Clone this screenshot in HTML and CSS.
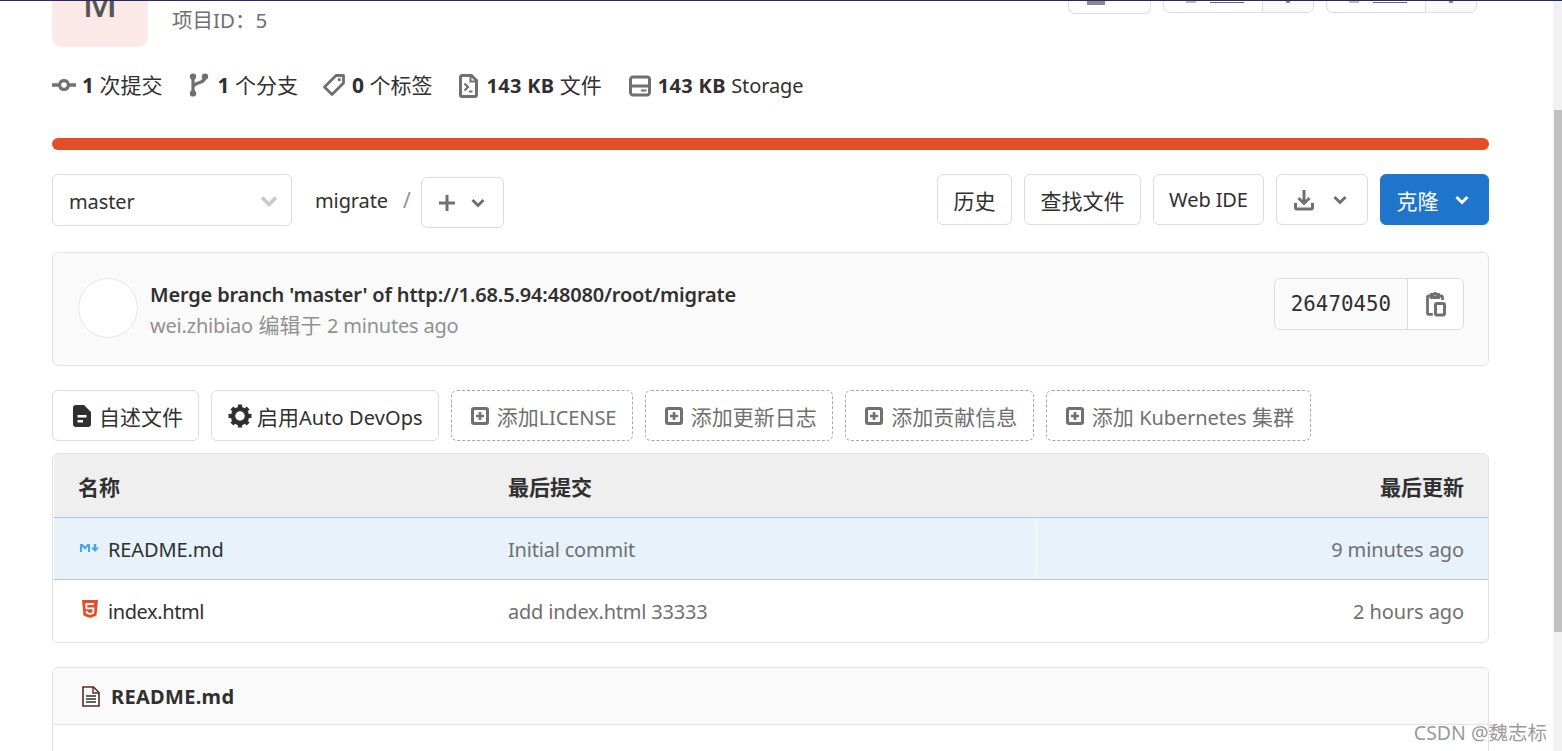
FILE: index.html
```html
<!DOCTYPE html>
<html lang="en">
<head>
    <meta charset="UTF-8">
    <meta name="viewport" content="width=device-width, initial-scale=1.0">
    <title>migrate</title>
    <link rel="stylesheet" href="styles.css">
</head>
<body>
<div class="page">
<main class="content">

    <!-- Project header, scrolled partly out of view -->
    <section class="project-head">
        <div class="project-info">
            <div class="project-avatar"><span>M</span></div>
            <div class="project-id">项目ID：5</div>
        </div>
        <div class="project-buttons">
            <div class="cut-btn cut-notify"><i class="cut-mark"></i></div>
            <div class="cut-btn cut-star"><span class="cut-label"><i class="cut-tick"></i><i class="cut-line"></i></span><span class="cut-count"><i class="cut-dot"></i></span></div>
            <div class="cut-btn cut-fork"><span class="cut-label"><i class="cut-tick"></i><i class="cut-line"></i></span><span class="cut-count"><i class="cut-dot"></i></span></div>
        </div>
    </section>

    <!-- Repo stats -->
    <ul class="stats">
        <li>
            <svg class="icon" width="24" height="24" viewBox="0 0 24 24"><path d="M0 10.300h6.300a5.900 5.900 0 0 1 11.400 0H24v3.400h-6.300a5.900 5.900 0 0 1-11.400 0H0zM12 9.200a2.800 2.800 0 1 0 0 5.600 2.800 2.800 0 0 0 0-5.600z" fill="#707070" fill-rule="evenodd"/></svg>
            <span><b>1</b> 次提交</span>
        </li>
        <li class="stat-branch">
            <svg class="icon" width="20" height="24" viewBox="0 0 20 24"><path d="M4 4v16M16 4c0 6-8 5-12 9" fill="none" stroke="#707070" stroke-width="3.200"/><circle cx="4" cy="3.600" r="3.200" fill="#707070"/><circle cx="4" cy="20.400" r="3.200" fill="#707070"/><circle cx="16" cy="3.600" r="3.200" fill="#707070"/></svg>
            <span><b>1</b> 个分支</span>
        </li>
        <li class="stat-tag">
            <svg class="icon" width="23" height="24" viewBox="0 0 23 24"><path d="M13 2.500h7.500V10L9 21.500 1.500 14z" fill="none" stroke="#707070" stroke-width="2.800" stroke-linejoin="round"/><circle cx="16.300" cy="6.700" r="1.600" fill="#707070"/></svg>
            <span><b>0</b> 个标签</span>
        </li>
        <li class="stat-files">
            <svg class="icon" width="19" height="24" viewBox="0 0 19 24"><path d="M3 1.500h9.500l5 5V21a1.500 1.500 0 0 1-1.500 1.500H3A1.500 1.500 0 0 1 1.500 21V3A1.500 1.500 0 0 1 3 1.500z" fill="none" stroke="#707070" stroke-width="3"/><path d="M11.500 2v5.500H17" fill="none" stroke="#707070" stroke-width="2"/><path d="M5.500 9.500l3.500 3.500-3.500 3.500M10 17.500h3.500" fill="none" stroke="#707070" stroke-width="2.200"/></svg>
            <span><b class="lat">143 KB</b> 文件</span>
        </li>
        <li class="stat-storage">
            <svg class="icon" width="22" height="24" viewBox="0 0 22 24"><path d="M4 3h14a2.500 2.500 0 0 1 2.500 2.500v13A2.500 2.500 0 0 1 18 21H4a2.500 2.500 0 0 1-2.500-2.500v-13A2.500 2.500 0 0 1 4 3zM1 12h20" fill="none" stroke="#707070" stroke-width="3"/><path d="M12 15.500h5.500v2H12z" fill="#707070"/></svg>
            <span><b class="lat">143 KB</b> <span class="lat">Storage</span></span>
        </li>
    </ul>

    <div class="lang-bar"></div>

    <!-- Branch and file toolbar -->
    <div class="tree-toolbar">
        <div class="branch-select">
            <span class="lat">master</span>
            <svg width="18" height="12" viewBox="0 0 18 12"><path d="M2 2.500l7 7 7-7" fill="none" stroke="#c9c9c9" stroke-width="3.600"/></svg>
        </div>
        <span class="crumb lat">migrate</span>
        <span class="crumb-sep">/</span>
        <button class="btn add-btn" type="button">
            <svg width="16" height="16" viewBox="0 0 16 16"><path d="M8 0v16M0 8h16" stroke="#707070" stroke-width="3"/></svg>
            <svg class="chevron" width="14" height="10" viewBox="0 0 14 10"><path d="M1.500 2l5.500 5.500L12.500 2" fill="none" stroke="#707070" stroke-width="3"/></svg>
        </button>
        <div class="toolbar-right">
            <button class="btn" type="button"><span>历史</span></button>
            <button class="btn" type="button"><span>查找文件</span></button>
            <button class="btn web-ide" type="button"><span class="lat">Web IDE</span></button>
            <button class="btn download-btn" type="button">
                <svg width="20" height="22" viewBox="0 0 20 22"><path d="M10 1v13M4.500 9l5.500 5.500L15.500 9" fill="none" stroke="#707070" stroke-width="3"/><path d="M1.500 14v4.500a1.500 1.500 0 0 0 1.500 1.500h14a1.500 1.500 0 0 0 1.500-1.500V14" fill="none" stroke="#707070" stroke-width="3"/></svg>
                <svg class="chevron" width="14" height="10" viewBox="0 0 14 10"><path d="M1.500 2l5.500 5.500L12.500 2" fill="none" stroke="#707070" stroke-width="3"/></svg>
            </button>
            <button class="btn clone-btn" type="button">
                <span>克隆</span>
                <svg class="chevron" width="14" height="10" viewBox="0 0 14 10"><path d="M1.500 2l5.500 5.500L12.500 2" fill="none" stroke="#fff" stroke-width="3"/></svg>
            </button>
        </div>
    </div>

    <!-- Latest commit -->
    <section class="commit-box">
        <div class="commit-avatar"></div>
        <div class="commit-text">
            <div class="commit-title lat">Merge branch 'master' of http://1.68.5.94:48080/root/migrate</div>
            <div class="commit-meta"><span class="lat">wei.zhibiao</span> 编辑于 <span class="lat">2 minutes ago</span></div>
        </div>
        <div class="sha-group">
            <span class="sha">26470450</span>
            <span class="sha-copy">
                <svg width="20" height="26" viewBox="0 0 20 26"><path d="M5.500 5H2.800a1.300 1.300 0 0 0-1.300 1.300V22a1.300 1.300 0 0 0 1.300 1.300h4M12.500 5h2.700a1.300 1.300 0 0 1 1.300 1.300V9M5.500 6.500V3.500h2a1.800 1.800 0 0 1 3.200 0h1.800v3z" fill="none" stroke="#707070" stroke-width="2.800"/><rect x="9.500" y="12.500" width="9" height="11.500" rx="1.500" fill="none" stroke="#707070" stroke-width="3"/></svg>
            </span>
        </div>
    </section>

    <!-- Quick actions -->
    <div class="quick-actions">
        <button class="btn btn-action" type="button">
            <svg width="18" height="22" viewBox="0 0 18 22"><path d="M3 0h8l7 7v12a3 3 0 0 1-3 3H3a3 3 0 0 1-3-3V3a3 3 0 0 1 3-3zm1.500 10v2.400h9V10zm0 5v2.400H10V15z" fill="#303030" fill-rule="evenodd"/></svg>
            <span>自述文件</span>
        </button>
        <button class="btn btn-action btn-gear" type="button">
            <svg width="24" height="24" viewBox="0 0 24 24"><circle cx="12" cy="12" r="7" fill="none" stroke="#303030" stroke-width="4.500"/><path d="M12 0.500v23M0.500 12h23M3.900 3.900l16.200 16.200M20.100 3.900L3.900 20.100" stroke="#303030" stroke-width="4.200" stroke-dasharray="4 15 4"/></svg>
            <span>启用<span class="lat">Auto DevOps</span></span>
        </button>
        <button class="btn btn-action btn-dashed" type="button"><svg width="18" height="18" viewBox="0 0 18 18"><rect width="18" height="18" rx="3" fill="#707070"/><rect x="3" y="3" width="12" height="12" rx="1" fill="#fff"/><path d="M9 5v8M5 9h8" stroke="#707070" stroke-width="2.600"/></svg><span>添加<span class="lat">LICENSE</span></span></button>
        <button class="btn btn-action btn-dashed" type="button"><svg width="18" height="18" viewBox="0 0 18 18"><rect width="18" height="18" rx="3" fill="#707070"/><rect x="3" y="3" width="12" height="12" rx="1" fill="#fff"/><path d="M9 5v8M5 9h8" stroke="#707070" stroke-width="2.600"/></svg><span>添加更新日志</span></button>
        <button class="btn btn-action btn-dashed" type="button"><svg width="18" height="18" viewBox="0 0 18 18"><rect width="18" height="18" rx="3" fill="#707070"/><rect x="3" y="3" width="12" height="12" rx="1" fill="#fff"/><path d="M9 5v8M5 9h8" stroke="#707070" stroke-width="2.600"/></svg><span>添加贡献信息</span></button>
        <button class="btn btn-action btn-dashed" type="button"><svg width="18" height="18" viewBox="0 0 18 18"><rect width="18" height="18" rx="3" fill="#707070"/><rect x="3" y="3" width="12" height="12" rx="1" fill="#fff"/><path d="M9 5v8M5 9h8" stroke="#707070" stroke-width="2.600"/></svg><span>添加 <span class="lat">Kubernetes</span> 集群</span></button>
    </div>

    <!-- File list -->
    <section class="file-table">
        <div class="file-row file-header">
            <div class="col-name">名称</div>
            <div class="col-commit">最后提交</div>
            <div class="col-date">最后更新</div>
        </div>
        <div class="file-row file-hover">
            <div class="col-name">
                <svg class="icon-md" width="19" height="8" viewBox="0 0 19 8"><path d="M1 8V1h1.200L5 4.200 7.800 1H9v7" fill="none" stroke="#42a5f5" stroke-width="2"/><path d="M15 0v4" stroke="#42a5f5" stroke-width="2.400"/><path d="M11 3.500h8L15 8z" fill="#42a5f5"/></svg>
                <span class="lat">README.md</span>
            </div>
            <div class="col-commit lat">Initial commit</div>
            <div class="col-date lat">9 minutes ago</div>
        </div>
        <div class="file-row">
            <div class="col-name">
                <svg class="icon-html" width="16" height="18" viewBox="0 0 16 18"><path d="M0 0h16l-1.500 15.500L8 18l-6.500-2.500z" fill="#e44d26"/><path d="M12 4H4.200l.3 4.300h7L11.200 12.800 8 14l-3.200-1.200-.2-2" fill="none" stroke="#fff" stroke-width="1.800"/></svg>
                <span class="lat html-name">index.html</span>
            </div>
            <div class="col-commit lat">add index.html 33333</div>
            <div class="col-date lat">2 hours ago</div>
        </div>
    </section>

    <!-- Readme -->
    <section class="readme-box">
        <div class="readme-head">
            <svg width="18" height="21" viewBox="0 0 18 21"><path d="M1 1h10.500L17 6.500V20H1z" fill="#fff" stroke="#5a2a22" stroke-width="1.600"/><path d="M11 1v6h6" fill="none" stroke="#5a2a22" stroke-width="1.400"/><path d="M4 10h10M4 13h10M4 16h10" stroke="#303030" stroke-width="1.400"/></svg>
            <b class="lat">README.md</b>
        </div>
    </section>
</main>

<div class="scrollbar"><div class="scroll-thumb"></div></div>
</div>

<div class="watermark">CSDN @魏志标</div>
</body>
</html>
```

FILE: styles.css
```css
* {
    box-sizing: border-box;
}

html, body {
    height: 100%;
    margin: 0;
    overflow: hidden;
}

body {
    font-family: "Noto Sans", "Noto Sans CJK SC", sans-serif;
    font-size: 21px;
    color: #303030;
    background: #fff;
    border-top: 1px solid #292961;
}

/* Segoe UI sits a little narrower than Noto Sans */
.lat {
    font-size: 20px;
    letter-spacing: -0.1px;
}

.page {
    display: flex;
    height: 750px;
}

.content {
    flex: 1;
    min-width: 0;
    padding: 0 64px 0 52px;
    overflow: hidden;
}

.scrollbar {
    width: 9px;
    background: #f1f1f1;
    padding: 109px 0 0 1px;
}

.scroll-thumb {
    height: 522px;
    background: #c1c1c1;
}

/* Project header */
.project-head {
    display: flex;
    justify-content: space-between;
    align-items: flex-start;
    height: 46px;
}

.project-info {
    display: flex;
    align-items: flex-end;
    height: 46px;
}

.project-avatar {
    width: 96px;
    height: 46px;
    background: #fbe9e7;
    border: 1px solid #f7ecea;
    border-top: 0;
    border-radius: 0 0 10px 10px;
    text-align: center;
    overflow: hidden;
    color: #555;
    font-size: 38px;
    font-weight: 500;
}

.project-avatar span {
    display: block;
    height: 18px;
    line-height: 2px;
}

.project-id {
    margin: 0 0 15px 24px;
    color: #707070;
    font-size: 20.500px;
    line-height: 24px;
}

.project-buttons {
    display: flex;
    gap: 12px;
    margin-right: 12px;
}

.cut-btn {
    display: flex;
    height: 12px;
    border: 1px solid #dcdcdc;
    border-top: 0;
    border-radius: 0 0 7px 7px;
    overflow: hidden;
}

.cut-notify {
    width: 83px;
    height: 13px;
    padding-left: 18px;
}

.cut-star, .cut-fork {
    width: 151px;
}

.cut-label {
    flex: 1;
    display: flex;
    gap: 14px;
    padding-left: 22px;
    border-right: 1px solid #dcdcdc;
}

.cut-count {
    width: 50px;
    background: #fafafa;
    display: flex;
    justify-content: center;
}

.cut-mark {
    display: block;
    width: 18px;
    height: 4px;
    background: #8a8a8a;
}

.cut-tick {
    display: block;
    width: 10px;
    height: 2px;
    background: #bbb;
}

.cut-line {
    display: block;
    width: 34px;
    height: 1px;
    margin-top: 1px;
    background: #666;
}

.cut-dot {
    display: block;
    width: 4px;
    height: 2px;
    background: #888;
}

/* Stats */
.stats {
    display: flex;
    list-style: none;
    margin: 0;
    padding: 23px 0 0;
    height: 91px;
    align-items: flex-start;
    line-height: 30px;
}

.stats li {
    display: flex;
    align-items: center;
}

.stats .icon {
    margin-right: 6px;
}

.stats b {
    font-weight: 700;
}

.stats b.lat {
    letter-spacing: 0.3px;
}

.stat-branch {
    margin-left: 27px;
}

.stat-tag {
    margin-left: 25px;
}

.stat-files {
    margin-left: 27px;
}

.stat-storage {
    margin-left: 27px;
}

.stats .stat-branch .icon,
.stats .stat-files .icon {
    margin-right: 8px;
}

.stats .stat-storage .icon {
    margin-right: 7px;
}

.lang-bar {
    height: 12px;
    border-radius: 6px;
    background: #e44f27;
}

/* Toolbar */
.tree-toolbar {
    display: flex;
    align-items: flex-start;
    margin-top: 24px;
    height: 54px;
}

.branch-select {
    display: flex;
    align-items: center;
    justify-content: space-between;
    width: 240px;
    height: 52px;
    padding: 2px 13px 0 16px;
    border: 1px solid #dcdcdc;
    border-radius: 6px;
}

.crumb {
    margin: 12px 0 0 23px;
    line-height: 30px;
}

.crumb-sep {
    margin: 11px 0 0 15px;
    line-height: 30px;
    color: #909090;
}

.btn {
    display: inline-flex;
    align-items: center;
    justify-content: center;
    height: 51px;
    padding: 0 15.500px;
    border: 1px solid #dcdcdc;
    border-radius: 6px;
    background: #fff;
    color: #303030;
    font: inherit;
    white-space: nowrap;
}

.add-btn {
    width: 83px;
    margin: 3px 0 0 10px;
    gap: 16px;
    padding: 0;
}

.chevron {
    margin-top: 1px;
}

.toolbar-right {
    display: flex;
    gap: 12px;
    margin-left: auto;
}

.web-ide {
    width: 111px;
    padding: 0;
}

.download-btn {
    width: 92px;
    gap: 19px;
    padding: 0 3px 0 0;
}

.clone-btn {
    width: 109px;
    gap: 16px;
    padding: 0 4px 0 0;
    color: #fff;
    background: #1f75cb;
    border-color: #1f75cb;
}

/* Commit */
.commit-box {
    display: flex;
    align-items: flex-start;
    height: 114px;
    margin-top: 24px;
    padding: 25px 24px 0 25px;
    background: #fafafa;
    border: 1px solid #e3e3e3;
    border-radius: 6px;
}

.commit-avatar {
    width: 60px;
    height: 60px;
    border-radius: 50%;
    border: 1px solid #e6e6e6;
    background: #fff;
}

.commit-text {
    margin-left: 12px;
    flex: 1;
}

.commit-title {
    font-weight: 600;
    line-height: 30px;
    margin-top: 2px;
    letter-spacing: -0.17px;
}

.commit-meta {
    color: #919191;
    line-height: 30px;
}

.commit-meta .lat {
    letter-spacing: -0.2px;
}

.sha-group {
    display: flex;
    height: 52px;
    border: 1px solid #dcdcdc;
    border-radius: 6px;
    overflow: hidden;
}

.sha {
    display: flex;
    align-items: center;
    padding: 0 16px;
    font-family: "DejaVu Sans Mono", monospace;
    font-size: 20.800px;
    background: #fafafa;
    border-right: 1px solid #dcdcdc;
}

.sha-copy {
    display: flex;
    align-items: center;
    justify-content: center;
    width: 55px;
    background: #fff;
}

/* Quick actions */
.quick-actions {
    display: flex;
    gap: 12px;
    margin-top: 24px;
}

.btn-action {
    gap: 8px;
    padding: 0 15px 0 20px;
}

.btn-gear {
    gap: 5px;
    padding-left: 16px;
}

.btn-gear .lat {
    letter-spacing: 0.08px;
}

.btn-dashed {
    border-style: dashed;
    border-color: #a8a8a8;
    color: #707070;
    gap: 8px;
    padding: 0 15.500px 0 19px;
}

/* File table */
.file-table {
    margin-top: 12px;
    height: 190px;
    border: 1px solid #e3e3e3;
    border-radius: 6px;
    overflow: hidden;
}

.file-row {
    display: grid;
    grid-template-columns: 430px 1fr auto;
    align-items: center;
    height: 62px;
    padding: 0 24px;
    margin-left: 1px;
    color: #707070;
}

.file-header {
    height: 64px;
    font-weight: 700;
    color: #303030;
    background: #efefef;
    border-bottom: 1px solid #aac9e8;
}

.file-hover {
    padding-top: 2px;
    background-color: #e7f2fb;
    border-bottom: 1px solid #a8c8e8;
    background-image: linear-gradient(#fff, #fff);
    background-size: 1px 100%;
    background-position: 982px 0;
    background-repeat: no-repeat;
}

.col-name {
    display: flex;
    align-items: center;
    color: #303030;
}

.col-commit.lat {
    letter-spacing: -0.2px;
}

.col-date {
    text-align: right;
}

.icon-md {
    margin: -4px 9px 0 2px;
}

.icon-html {
    margin: -4px 10px 0 4px;
}

.html-name {
    letter-spacing: -0.4px;
}

/* Readme */
.readme-box {
    margin-top: 24px;
    height: 120px;
    border: 1px solid #e3e3e3;
    border-radius: 6px 6px 0 0;
}

.readme-head {
    display: flex;
    align-items: center;
    height: 57px;
    padding: 1px 0 0 29px;
    gap: 11px;
    background: #fafafa;
    border-bottom: 1px solid #e3e3e3;
    border-radius: 6px 6px 0 0;
}

.readme-head b {
    letter-spacing: 0.3px;
}

.watermark {
    position: absolute;
    right: 15px;
    bottom: 5px;
    font-size: 19.500px;
    line-height: 26px;
    color: #9a9a9a;
    text-shadow: 1px 1px 1px #fff;
}
```
